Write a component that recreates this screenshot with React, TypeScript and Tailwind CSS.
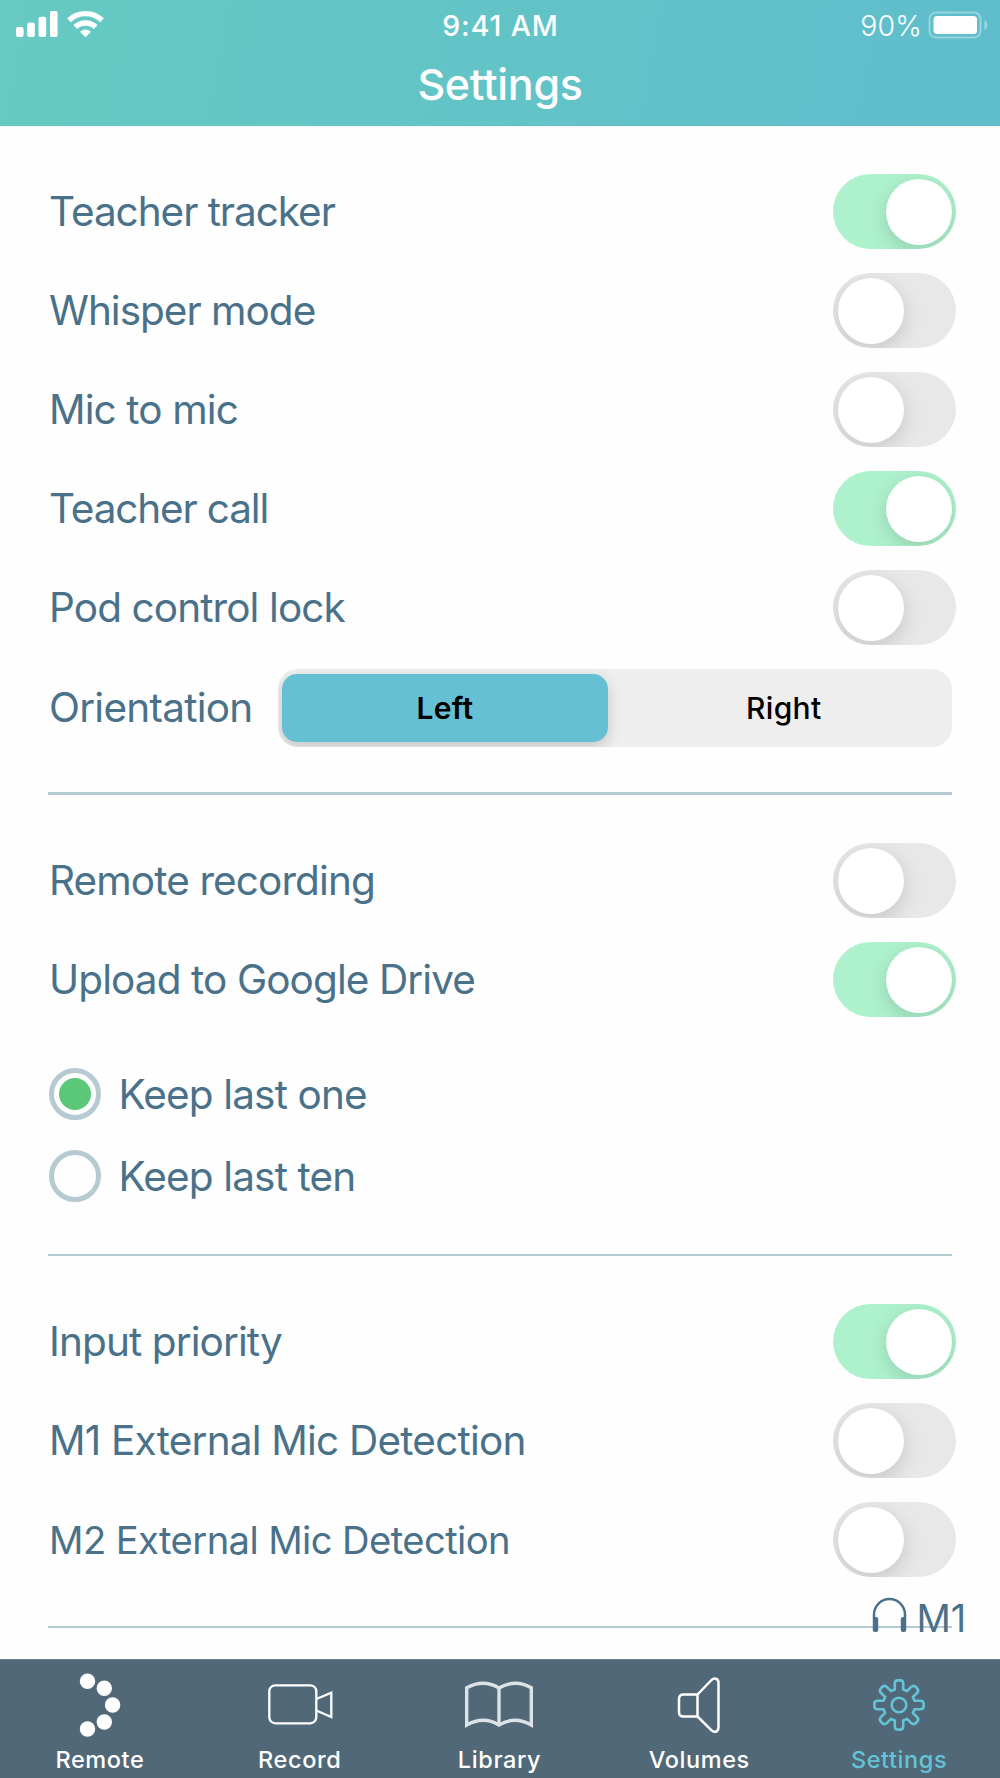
import { useState } from "react";
import clsx from "clsx";

interface ToggleRowProps {
  label: string;
  initial?: boolean;
  text?: string;
}

const ToggleRow = ({ label, initial = false, text = "text-[40.5px] tracking-[-0.9px]" }: ToggleRowProps) => {
  const [on, setOn] = useState(initial);

  return (
    <div className="flex h-[99px] shrink-0 items-center justify-between pr-[44px] pl-[49px]">
      <span className={clsx("pt-[2px] whitespace-nowrap text-[#4a718a]", text)}>{label}</span>
      <button
        role="switch"
        aria-checked={on}
        onClick={() => setOn(!on)}
        className={clsx(
          "flex h-[75px] w-[123px] items-center overflow-hidden rounded-full px-[4.5px]",
          on ? "justify-end bg-[#aef2cd]" : "bg-[#e8e8e8]"
        )}
      >
        <span className="size-[66px] rounded-full bg-white shadow-[0_6px_20px_rgba(0,0,0,0.15)]" />
      </button>
    </div>
  );
};

const Divider = ({ height = "h-[2px]" }) => (
  <div className={clsx("mx-12 shrink-0 bg-[#b5cbd2]", height)} />
);

interface RadioRowProps {
  label: string;
  checked: boolean;
  onSelect: () => void;
}

const RadioRow = ({ label, checked, onSelect }: RadioRowProps) => (
  <button onClick={onSelect} className="flex h-[82px] items-center pl-[49px] text-left">
    <span className="flex size-[52px] items-center justify-center rounded-full border-[5px] border-[#b6cad1]">
      {checked && <span className="size-8 rounded-full bg-[#5ac878]" />}
    </span>
    <span className="ml-[17.5px] pt-[3px] text-[40.5px] tracking-[-0.85px] text-[#4a718a]">
      {label}
    </span>
  </button>
);

const SignalIcon = () => (
  <svg width="42" height="28" viewBox="0 0 42 28" fill="white">
    <rect x="0" y="17" width="7.6" height="10" rx="2" />
    <rect x="11.2" y="12.5" width="7.6" height="14.5" rx="2" />
    <rect x="22.6" y="6.8" width="7.6" height="20.2" rx="2" />
    <rect x="34" y="1" width="7.6" height="26" rx="2" />
  </svg>
);

const WifiIcon = () => (
  <svg width="37" height="28" viewBox="0 0 37 28" fill="none" stroke="white" strokeWidth="5.4">
    <path d="M2 10.2 A24 24 0 0 1 35 10.2" />
    <path d="M8.3 17 A15 15 0 0 1 28.7 17" />
    <path d="M13 21.8 Q18.5 17 24 21.8 L18.5 27.2 Z" fill="white" stroke="none" />
  </svg>
);

const BatteryIcon = () => (
  <svg width="60" height="28" viewBox="0 0 60 28" fill="none">
    <rect x="1.5" y="1.5" width="51" height="25" rx="6.5" stroke="white" strokeOpacity="0.35" strokeWidth="2" />
    <rect x="5.5" y="5" width="43.5" height="18" rx="3.5" fill="white" />
    <path d="M56.5 9 Q59.5 11 59.5 14 Q59.5 17 56.5 19 Z" fill="white" fillOpacity="0.4" />
  </svg>
);

const RemoteIcon = () => (
  <svg width="68" height="68" viewBox="0 0 68 68" fill="white">
    <circle cx="21.5" cy="10.2" r="7.7" />
    <circle cx="38.3" cy="17.2" r="7.7" />
    <circle cx="46.6" cy="34" r="7.7" />
    <circle cx="38.3" cy="51" r="7.7" />
    <circle cx="21.5" cy="58" r="7.7" />
  </svg>
);

const RecordIcon = () => (
  <svg width="68" height="68" viewBox="0 0 68 68" fill="none" stroke="white" strokeWidth="2.3">
    <rect x="3.3" y="14.3" width="47" height="38" rx="6" />
    <path d="M50.3 28 L65.3 21.8 V46 L50.3 39.5" />
  </svg>
);

const LibraryIcon = () => (
  <svg width="70" height="68" viewBox="0 0 70 68" fill="none" stroke="#dce2e5" strokeWidth="3.4">
    <path d="M2.7 16.8 Q19.5 7.5 35 17 Q51.5 7.5 67.3 16.8 V54 Q50.5 44.5 35 54 Q19.5 44.5 2.7 54 Z" />
    <path d="M35 17 V54" />
  </svg>
);

const VolumesIcon = () => (
  <svg width="68" height="68" viewBox="0 0 68 68" fill="none" stroke="white" strokeWidth="2.5" strokeLinejoin="round">
    <path d="M32.5 23.500 H18.500 Q14 23.500 14 28 V41 Q14 45.500 18.500 45.500 H32.500 Z" />
    <path d="M32.5 23.500 L46.500 9 Q49 6.800 51.500 8 Q53.500 9 53.500 12 V56 Q53.500 60 50.800 60.700 Q48.300 61.200 46.300 59.200 L32.500 45.500" />
  </svg>
);

const SettingsIcon = () => (
  <svg width="68" height="68" viewBox="-34 -34 68 68" fill="none" stroke="#65c3d8" strokeWidth="2.6" strokeLinejoin="round">
    <path d="M-4.200 -15.500 V-21 Q-4.200 -24.600 -1.500 -24.600 H1.500 Q4.200 -24.600 4.200 -21 V-15.500 L8 -13.900 L11.700 -17.700 Q14.300 -20.300 16.500 -18.300 L18.300 -16.500 Q20.300 -14.300 17.700 -11.700 L13.900 -8 L15.500 -4.200 H21 Q24.600 -4.200 24.600 -1.500 V1.500 Q24.600 4.200 21 4.200 H15.500 L13.900 8 L17.700 11.700 Q20.300 14.300 18.300 16.500 L16.500 18.300 Q14.300 20.300 11.700 17.700 L8 13.900 L4.200 15.500 V21 Q4.200 24.600 1.500 24.600 H-1.500 Q-4.200 24.600 -4.200 21 V15.500 L-8 13.900 L-11.700 17.700 Q-14.300 20.300 -16.500 18.300 L-18.300 16.500 Q-20.300 14.300 -17.700 11.700 L-13.900 8 L-15.500 4.200 H-21 Q-24.600 4.200 -24.600 1.500 V-1.500 Q-24.600 -4.200 -21 -4.200 H-15.500 L-13.900 -8 L-17.700 -11.700 Q-20.300 -14.300 -18.300 -16.500 L-16.500 -18.300 Q-14.300 -20.300 -11.700 -17.700 L-8 -13.900 Z" />
    <circle r="7.3" />
  </svg>
);

const HeadphonesIcon = () => (
  <svg width="35" height="36" viewBox="0 0 35 36" fill="#4a718a">
    <path d="M2 22 V17.5 A15.5 15.5 0 0 1 33 17.5 V22" fill="none" stroke="#4a718a" strokeWidth="2.5" />
    <rect x="0.8" y="20" width="5.4" height="15" rx="2" />
    <rect x="28.8" y="20" width="5.4" height="15" rx="2" />
  </svg>
);

const tabs = [
  { name: "Remote", icon: <RemoteIcon /> },
  { name: "Record", icon: <RecordIcon /> },
  { name: "Library", icon: <LibraryIcon /> },
  { name: "Volumes", icon: <VolumesIcon /> },
  { name: "Settings", icon: <SettingsIcon /> },
];

const App = () => {
  const [side, setSide] = useState("Left");
  const [keep, setKeep] = useState("one");

  return (
    <div className="relative flex h-[1778px] w-[1000px] flex-col overflow-hidden bg-[#fefefe] font-['Inter',sans-serif]">
      {/* Status bar + title */}
      <header className="h-[125.5px] shrink-0 bg-linear-[100deg] from-[#66cac2] to-[#5fbdcc] text-white">
        <div className="grid h-[51px] grid-cols-3 items-center pr-3 pl-4">
          <div className="flex items-center gap-[9px] pb-[3px]">
            <SignalIcon />
            <WifiIcon />
          </div>
          <span className="pt-[2px] pr-[3px] text-center text-[28.5px] font-medium tracking-[0.9px]">
            9:41 AM
          </span>
          <div className="flex items-center justify-end gap-[6px]">
            <span className="pt-[2px] text-[28.5px] font-[350] tracking-[0.1px]">90%</span>
            <span className="pb-[2px]">
              <BatteryIcon />
            </span>
          </div>
        </div>
        <h1 className="text-center text-[43px] leading-[66px] font-medium tracking-[-0.3px]">Settings</h1>
      </header>

      <main className="flex min-h-0 flex-1 flex-col pt-[36.5px]">
        <ToggleRow label="Teacher tracker" text="text-[40.5px] tracking-[-1.05px]" initial />
        <ToggleRow label="Whisper mode" text="text-[40.5px] tracking-[-1px]" />
        <ToggleRow label="Mic to mic" />
        <ToggleRow label="Teacher call" text="text-[40.5px] tracking-[-1.15px]" initial />
        <ToggleRow label="Pod control lock" />
        <div className="flex h-[99px] shrink-0 items-center justify-between pt-[3px] pr-[48.5px] pl-[49px]">
          <span className="text-[40.5px] tracking-[-0.75px] text-[#4a718a]">Orientation</span>
          <div className="flex h-[78px] w-[674px] overflow-hidden rounded-[20px] bg-[#eeeeee] p-[5px] pl-[4.5px]">
            {["Left", "Right"].map((s) => (
              <button
                key={s}
                onClick={() => setSide(s)}
                className={clsx(
                  "h-[68px] rounded-[15px] text-[30px] text-black",
                  s === "Left" ? "w-[326px]" : "flex-1 pl-[13px]",
                  side === s
                    ? "bg-[#66c0d4] font-semibold tracking-[0.3px] shadow-[0_5px_14px_rgba(0,0,0,0.17)]"
                    : "font-medium tracking-[0.3px]"
                )}
              >
                {s}
              </button>
            ))}
          </div>
        </div>

        <div className="h-[36px] shrink-0" />
        <Divider height="h-[3px]" />
        <div className="h-[36px] shrink-0" />

        <ToggleRow label="Remote recording" />
        <ToggleRow label="Upload to Google Drive" initial />
        <div className="mt-[24px] flex shrink-0 flex-col">
          <RadioRow label="Keep last one" checked={keep === "one"} onSelect={() => setKeep("one")} />
          <RadioRow label="Keep last ten" checked={keep === "ten"} onSelect={() => setKeep("ten")} />
        </div>

        <div className="h-[37px] shrink-0" />
        <Divider />
        <div className="h-[36px] shrink-0" />

        <ToggleRow label="Input priority" initial />
        <ToggleRow label="M1 External Mic Detection" text="text-[40.5px] tracking-[-0.8px]" />
        <ToggleRow label="M2 External Mic Detection" text="text-[38.2px] tracking-[-0.6px]" />
        <div className="h-[37px] shrink-0" />
        <Divider />
      </main>

      {/* Connected mic badge, floats over the last divider */}
      <div className="absolute top-[1597px] left-[871.5px] flex h-[42px] items-start gap-[10px]">
        <HeadphonesIcon />
        <span className="text-[38px] leading-[42px] text-[#4a718a]">M1</span>
      </div>

      <nav className="flex h-[119px] shrink-0 border-t border-[#6f838c] bg-[#506877] pr-px">
        {tabs.map((tab) => (
          <button
            key={tab.name}
            className={clsx(
              "flex flex-1 flex-col items-center pt-[11px]",
              tab.name === "Settings" ? "text-[#65c3d8]" : "text-white"
            )}
          >
            {tab.icon}
            <span className="mt-[5px] text-[23.5px] leading-[32px] font-medium tracking-[0.6px]">
              {tab.name}
            </span>
          </button>
        ))}
      </nav>
    </div>
  );
};

export default App;
